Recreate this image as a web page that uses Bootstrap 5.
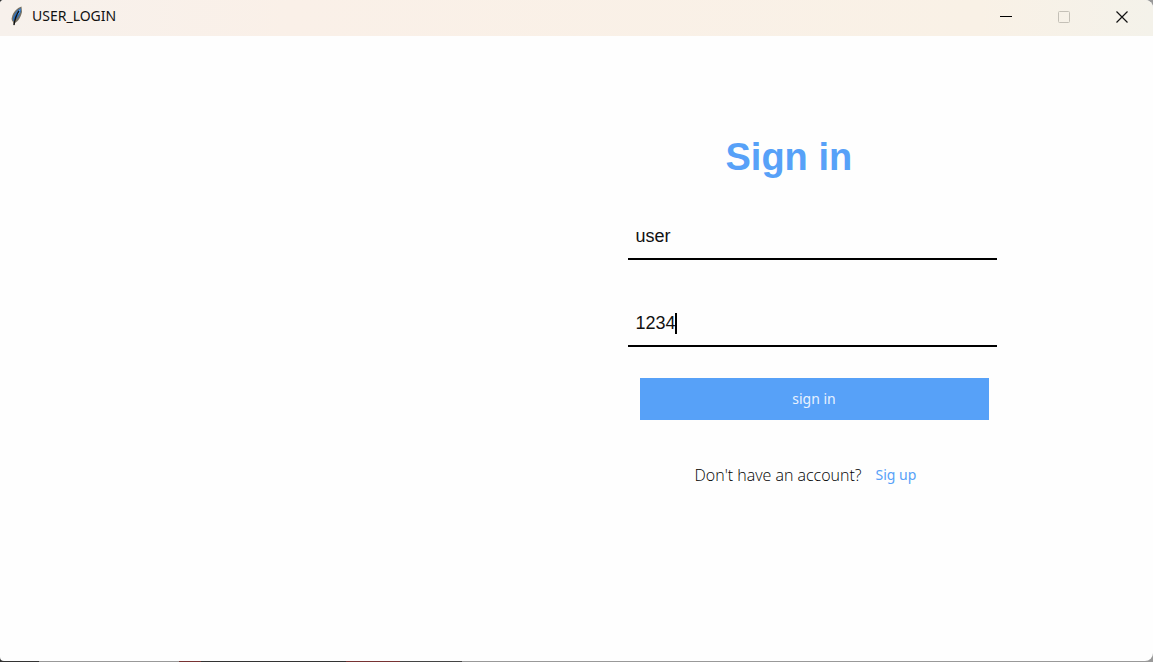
<!DOCTYPE html>
<html lang="en">
<head>
<meta charset="utf-8">
<meta name="viewport" content="width=device-width, initial-scale=1">
<title>USER_LOGIN</title>
<link href="https://cdn.jsdelivr.net/npm/bootstrap@5.3.0/dist/css/bootstrap.min.css" rel="stylesheet">
<style>
  body { font-family: "Noto Sans", "Open Sans", sans-serif; background: linear-gradient(90deg, #333 0 39px, #999 39px 179px, #733 179px 201px, #333 201px 346px, #733 346px 400px, #444 400px 462px, #999 462px); }
  .app-window { border-radius: 4px 8px 8px 4px; overflow: hidden; margin-bottom: 1px; background: #fefefe; min-height: calc(100vh - 1px); }
  .title-bar { height: 36px; background: linear-gradient(90deg, #f7f1ec, #faf0e8 25%, #f9f1e6 85%, #f4f2ea); color: #111; padding: 0 2px 0 10px; }
  .title-text { font-size: 14px; line-height: 20px; }
  .win-btn { width: 58px; height: 34px; }
  .login-form { width: 369px; margin-left: 51px; padding-top: 97px; }
  .login-title { font: bold 38px/48px "Liberation Sans", Arial, sans-serif; color: #57a1f8; padding-left: 98px; margin-bottom: 40px; }
  .line-input, .line-input:focus { font: 18px/26px "Liberation Sans", Arial, sans-serif; color: #111; background: transparent; border: 0; border-bottom: 2px solid #000; border-radius: 0; box-shadow: none; height: auto; padding: 2px 8px 9px; }
  .caret { left: 47px; top: 5px; width: 2px; height: 21px; background: #000; }
  .field-gap { margin-bottom: 48px; }
  .btn-sign { background: #57a1f8; color: #e8f2ff; border: 0; border-radius: 0; font-size: 14px; line-height: 20px; padding: 11px; margin: 31px 8px 0 12px; }
  .account-row { font-size: 16px; line-height: 20px; margin-top: 45px; padding-left: 67px; gap: 14px; }
  .account-note { font-family: "Open Sans", sans-serif; font-weight: 300; color: #000; }
  .account-link { color: #57a1f8; font-size: 14px; }
</style>
</head>
<body>
<div class="app-window d-flex flex-column">
  <header class="title-bar d-flex align-items-start">
    <div class="d-flex align-items-center flex-grow-1 h-100 pb-1">
      <svg class="me-2" width="14" height="22" viewBox="0 0 14 22" aria-hidden="true">
        <path d="M11.500 1.500C7 3 3 7 2 12c-1 2 0 4 1 5l1 4 1-3c4-2 6-7 7-11z" fill="#777264"/>
        <path d="M10.800 3C7 5 4 9 3 13l0 3 2-1c4-3 5-6 6-9z" fill="#2f6fb8"/>
        <path d="M10.500 4C8 6 6 9 5.500 12l4-4z" fill="#6aaeee"/>
        <path d="M9 6C6 10 5 13 4 20" fill="none" stroke="#111" stroke-width="1.300"/>
      </svg>
      <span class="title-text">USER_LOGIN</span>
    </div>
    <div class="d-flex">
      <button type="button" class="win-btn btn p-0 border-0 d-flex align-items-center justify-content-center" aria-label="Minimize"><svg width="12" height="12" viewBox="0 0 12 12"><path d="M0 5.500h12" stroke="#000"/></svg></button>
      <button type="button" class="win-btn btn p-0 border-0 d-flex align-items-center justify-content-center" aria-label="Maximize"><svg width="12" height="12" viewBox="0 0 12 12"><rect x=".5" y=".5" width="11" height="11" rx="1" fill="none" stroke="#c4c0b7"/></svg></button>
      <button type="button" class="win-btn btn p-0 border-0 d-flex align-items-center justify-content-center" aria-label="Close"><svg width="12" height="12" viewBox="0 0 12 12"><path d="M.5.500l11 11M11.500.500l-11 11" stroke="#111" stroke-width="1.200"/></svg></button>
    </div>
  </header>
  <main class="row g-0 flex-grow-1">
    <section class="col-6 offset-6">
      <form class="login-form" onsubmit="return false">
        <h1 class="login-title">Sign in</h1>
        <div class="field-gap">
          <label class="visually-hidden" for="username">Username</label>
          <input id="username" class="form-control line-input" type="text" value="user">
        </div>
        <div class="position-relative">
          <label class="visually-hidden" for="password">Password</label>
          <input id="password" class="form-control line-input" type="text" value="1234">
          <span class="caret position-absolute"></span>
        </div>
        <div class="d-grid"><button type="submit" class="btn btn-sign">sign in</button></div>
        <div class="account-row d-flex">
          <span class="account-note">Don't have an account?</span>
          <a class="account-link text-decoration-none" href="#">Sig up</a>
        </div>
      </form>
    </section>
  </main>
</div>
<script src="https://cdn.jsdelivr.net/npm/bootstrap@5.3.0/dist/js/bootstrap.bundle.min.js"></script>
</body>
</html>
